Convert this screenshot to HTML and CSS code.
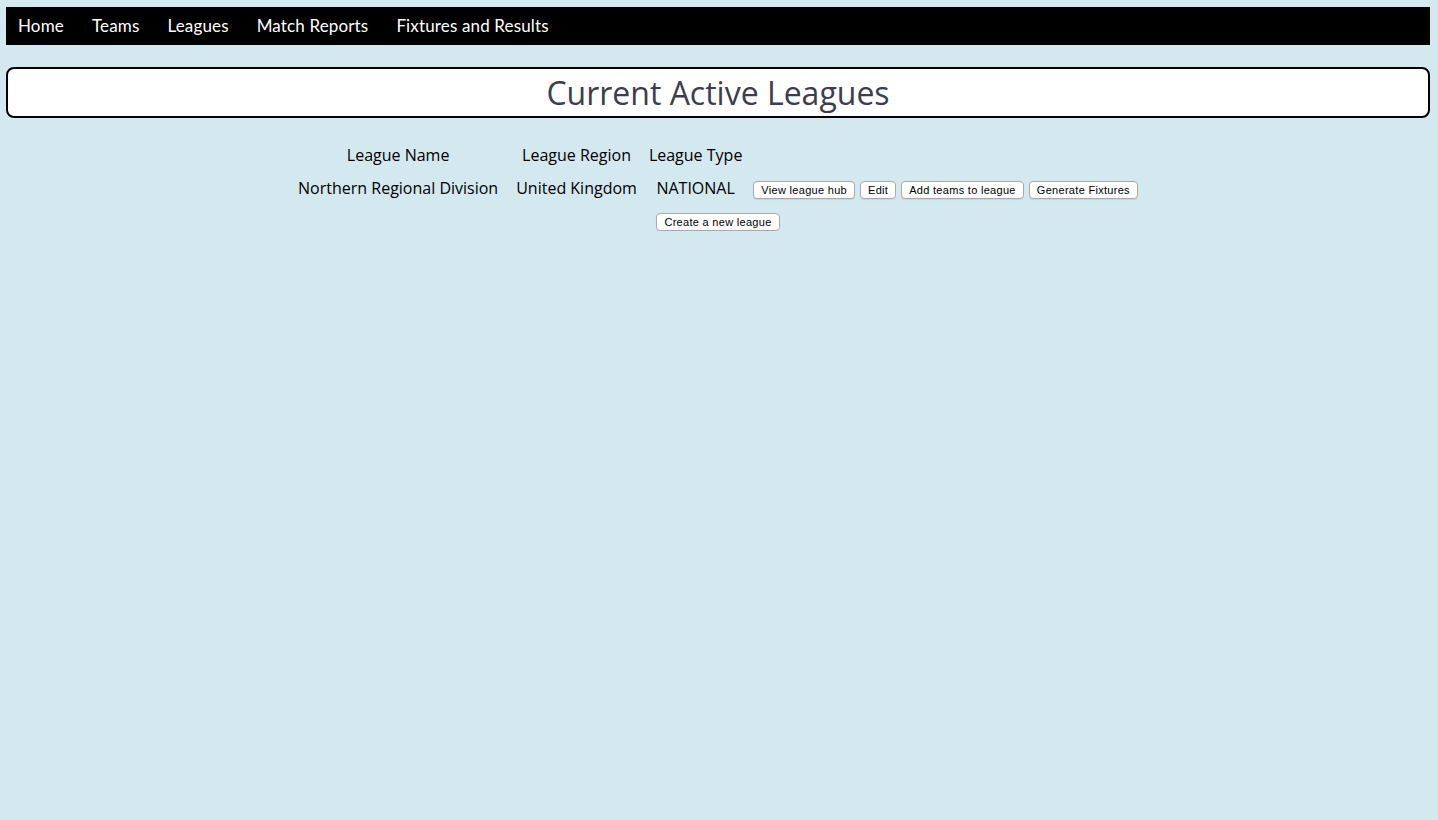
FILE: index.html
```html
<!DOCTYPE html>
<html>
<head>
<meta charset="utf-8">
<title>Leagues</title>
<link rel="stylesheet" href="styles.css">
</head>
<body>
<nav class="topnav">
  <a href="#">Home</a>
  <a href="#">Teams</a>
  <a href="#">Leagues</a>
  <a href="#">Match Reports</a>
  <a href="#">Fixtures and Results</a>
</nav>
<header class="title-box">
  <h1>Current Active Leagues</h1>
</header>
<main class="content">
  <table class="leagues">
    <thead>
      <tr>
        <th class="c-name">League Name</th>
        <th class="c-region">League Region</th>
        <th class="c-type">League Type</th>
        <th class="c-actions"></th>
      </tr>
    </thead>
    <tbody>
      <tr>
        <td class="c-name">Northern Regional Division</td>
        <td class="c-region">United Kingdom</td>
        <td class="c-type">NATIONAL</td>
        <td class="c-actions">
          <div class="actions">
            <button class="btn">View league hub</button>
            <button class="btn">Edit</button>
            <button class="btn">Add teams to league</button>
            <button class="btn">Generate Fixtures</button>
          </div>
        </td>
      </tr>
    </tbody>
  </table>
  <div class="create-row">
    <button class="btn">Create a new league</button>
  </div>
</main>
</body>
</html>
```
FILE: styles.css
```css
html {
  background: #d4e8f0;
}
body {
  margin: 7px 8px 0 6px;
  background: #d4e8f0;
  font-family: "Open Sans", "Liberation Sans", sans-serif;
  color: #000;
}
.topnav {
  background: #000;
  height: 38px;
  display: flex;
  align-items: center;
  gap: 28px;
  padding: 0 12px;
}
.topnav a {
  color: #fff;
  text-decoration: none;
  font-family: "Lato", "Open Sans", sans-serif;
  font-size: 17px;
  letter-spacing: 0.15px;
  margin-top: -2px;
}
.title-box {
  margin-top: 22px;
  background: #fff;
  border: 2px solid #000;
  border-radius: 8px;
  height: 47px;
  display: flex;
  align-items: center;
  justify-content: center;
}
.title-box h1 {
  margin: 0;
  font-weight: 400;
  font-size: 32px;
  color: #3d3d4d;
}
.content {
  display: flex;
  flex-direction: column;
  align-items: center;
  padding-top: 23px;
}
.leagues {
  border-collapse: collapse;
  font-size: 16px;
}
.leagues th {
  font-weight: 400;
  text-align: center;
  padding: 0 9px;
  height: 28px;
  vertical-align: middle;
}
.leagues td {
  text-align: center;
  padding: 0 9px;
  height: 38px;
  vertical-align: middle;
}
.leagues .c-type {
  padding: 0 3px;
}
.leagues .c-actions {
  padding: 0 9px 0 8px;
}
.actions {
  display: flex;
  gap: 5px;
  align-items: center;
  margin-top: 3px;
}
.btn {
  font-family: "Liberation Sans", Arial, sans-serif;
  font-size: 11px;
  letter-spacing: 0.3px;
  color: #000;
  background: #fff;
  border: 1px solid #a9a9a9;
  border-radius: 4px;
  height: 18px;
  padding: 0 7px;
  line-height: 16px;
  box-shadow: 0 1px 1px rgba(0,0,0,0.08);
}
.create-row {
  margin-top: 6px;
  display: flex;
  justify-content: center;
}
```
